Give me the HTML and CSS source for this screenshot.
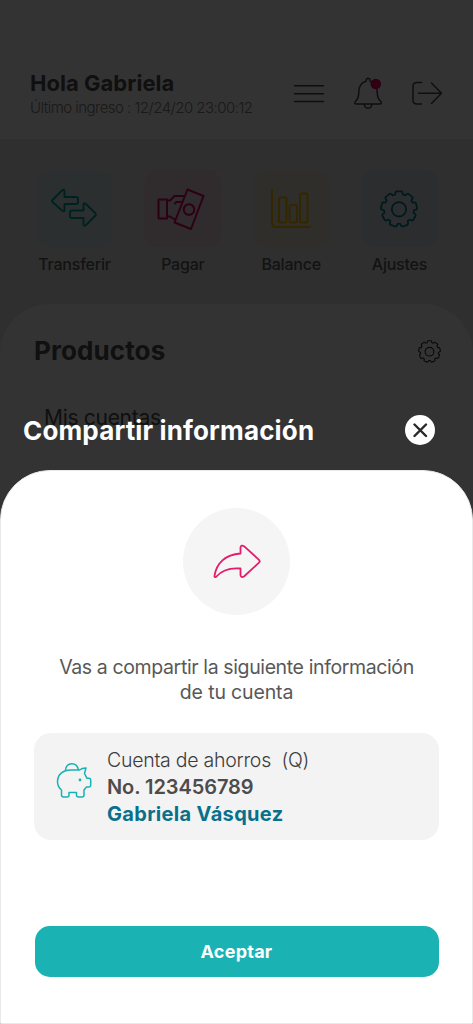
FILE: index.html
```html
<!DOCTYPE html>
<html lang="es">
<head>
<meta charset="utf-8">
<title>Compartir información</title>
<link rel="stylesheet" href="styles.css">
</head>
<body>
<svg width="0" height="0" class="defs">
  <symbol id="gear" viewBox="0 0 38 38">
    <path d="M15.570 2.300Q15.600 1.300 16.600 1.300H21.400Q22.400 1.300 22.430 2.300L22.880 4.510 25.340 5.410 27 4Q27.730 3.260 28.500 3.900L32.400 7.100Q33 7.670 32.500 8.400L31.290 10.400 32.590 12.660 34.900 12.500Q35.800 12.550 36 13.400L37 18.300Q37 19.310 36.200 19.500L33.940 20.310 33.490 22.880 35.400 24.300Q36.020 24.860 35.600 25.700L33.200 30Q32.580 30.810 31.800 30.500L29.610 29.610 27.600 31.290 28.100 33.500Q28.270 34.430 27.400 34.800L22.800 36.500Q21.820 36.780 21.400 36L20.310 33.940H17.690L16.600 36Q16.180 36.780 15.200 36.500L10.600 34.800Q9.730 34.430 9.900 33.500L10.400 31.290 8.390 29.610 6.200 30.500Q5.420 30.810 4.800 30L2.400 25.700Q1.980 24.860 2.600 24.300L4.510 22.880 4.060 20.310 1.800 19.500Q1 19.310 1 18.300L2 13.400Q2.200 12.550 3.100 12.500L5.410 12.660 6.710 10.400 5.500 8.400Q5 7.670 5.600 7.100L9.500 3.900Q10.270 3.260 11 4L12.660 5.410 15.120 4.510z"/>
    <circle cx="19" cy="19.300" r="7.200"/>
  </symbol>
</svg>
<div class="screen">
  <main class="home">
    <header class="top">
      <div class="hello">
        <h1>Hola Gabriela</h1>
        <p>Último ingreso : 12/24/20 23:00:12</p>
      </div>
      <nav class="tools">
        <svg class="icon" width="32" height="32" viewBox="0 0 32 32"><path d="M1.500 8.800h29M1.500 16.800h29M1.500 24.500h29"/></svg>
        <svg class="icon" width="30" height="32" viewBox="0 0 30 32"><path d="M13 4.200c-.2-4 4.400-4 4.100 0 4.600 1.400 6.900 4.900 7 9.800.1 5.500.7 8 3.500 10.300 1.400 1.400.8 2.700-1 2.700H3.700c-2 0-2.600-1.300-1.100-2.700C5.500 21.800 5.800 19 5.900 14c.1-5.200 2.700-8.400 7.100-9.800zM11.300 27.300c.3 5.200 7.200 5.200 7.500 0"/><circle class="dot" cx="22.800" cy="7" r="5.300"/></svg>
        <svg class="icon" width="32" height="32" viewBox="0 0 32 32"><path d="M10.500 5.500H6q-4 0-4 4v13.500q0 4 4 4h4.500M7.500 16.200H30M20.500 6l10 10.200-10 10.300"/></svg>
      </nav>
    </header>
    <section class="quick">
      <div class="action teal"><div class="tile"><svg width="48" height="42" viewBox="0 0 48 42"><path d="M2.500 12 12 2.500q2.500-2 2.500 1V9H26q2 0 2 2v3q0 2-2 2H14.500v5.500q0 3-2.500 1L2.500 14q-1-1 0-2zM45.500 25.500 36 16q-2.500-2-2.500 1v5.500H22q-2 0-2 2v3.500q0 2 2 2h11.500v6q0 3 2.500 1l9.500-9.500q1-1 0-2z"/></svg></div><span class="t1">Transferir</span></div>
      <div class="action pink"><div class="tile"><svg width="48" height="42" viewBox="0 0 48 42"><path d="M1.500 11.500h8.500v19H1.500zM10 12.500h3l4.500-4.500h10.500M10 28.500h3l5.500 3.500M18 15.500l1.500-1.500h5.500M30.500 1.500 46.500 8 34 41 17.500 34.500z"/><circle cx="32" cy="21.500" r="5.300"/></svg></div><span class="t2">Pagar</span></div>
      <div class="action yellow"><div class="tile"><svg width="42" height="42" viewBox="0 0 42 42"><path d="M2 2v33q0 4 4 4h34"/><rect x="9" y="9.500" width="7.500" height="25" rx="1.500"/><rect x="19.500" y="17" width="7.500" height="17.500" rx="1.500"/><rect x="30" y="5.500" width="7.500" height="29" rx="1.500"/></svg></div><span class="t3">Balance</span></div>
      <div class="action blue"><div class="tile"><svg width="38" height="38"><use href="#gear"/></svg></div><span class="t4">Ajustes</span></div>
    </section>
    <section class="products">
      <div class="products-head"><h2>Productos</h2><svg class="icon" width="23" height="23"><use href="#gear"/></svg></div>
      <p>Mis cuentas</p>
    </section>
  </main>
  <div class="overlay">
    <div class="modal-head">
      <h2>Compartir información</h2>
      <button class="close" aria-label="Cerrar"><svg width="15" height="15" viewBox="0 0 15 15"><path d="M1.500 1.500l11.500 11.500M13 1.500l-11.500 11.500"/></svg></button>
    </div>
    <section class="sheet">
      <div class="badge"><svg width="48" height="36" viewBox="0 0 48 36"><path d="M27.500 9.500V3.500q.5-3 3.500-1.300L46 15.800q1.300 1.400 0 2.800L31 32.500q-3 1.500-3.500-1.300V24.500C17 23.500 9 26 3.500 32.500c-1 1.200-2.300.7-2-.8C3.500 19.500 12 10.500 27.500 9.500z"/></svg></div>
      <p class="lead"><span class="l1">Vas a compartir la siguiente información</span><br><span class="l2">de tu cuenta</span></p>
      <div class="card">
        <svg width="36" height="38" viewBox="0 0 36 38"><path d="M15 9C7 9 1.500 13.500 1.500 20.500c0 4 1.500 6.500 4 8.500v5q0 2 2 2h3.500q2 0 2-2v-2.500h7.500V34q0 2 2 2H26q2 0 2-2v-5l2.500-3H33q1.700 0 1.700-1.700V19q0-1.700-1.700-1.700h-2l-2.500-4.800 1.500-5.500q-4 0-6.500 2zM9.300 9.500c1-9 11.700-9 13.200-.5"/><circle cx="24" cy="19" r="1.400" class="eye"/></svg>
        <div class="info">
          <span class="kind">Cuenta de ahorros&nbsp; (Q)</span>
          <span class="number">No. 123456789</span>
          <span class="owner">Gabriela Vásquez</span>
        </div>
      </div>
      <button class="accept">Aceptar</button>
    </section>
  </div>
</div>
</body>
</html>
```
FILE: styles.css
```css
* { box-sizing: border-box; }
body { margin: 0; font-family: Inter, "Open Sans", sans-serif; }
h1, h2, p { margin: 0; }
button { border: 0; padding: 0; font: inherit; }
svg { display: block; flex: none; fill: none; stroke: currentColor; stroke-width: 1.5; stroke-linejoin: round; stroke-linecap: round; }
.defs { position: absolute; }
.screen { position: relative; width: 473px; height: 1024px; overflow: hidden; background: #fff; }
.home { height: 100%; display: flex; flex-direction: column; background: #eaeaea; color: #505050; white-space: nowrap; }
.top { height: 139px; padding: 69px 30px 0; background: #fff; display: flex; justify-content: space-between; }
.hello { width: 230px; }
.hello h1 { font-size: 22px; line-height: 28px; letter-spacing: .03px; }
.hello p { font-size: 15px; line-height: 22px; font-weight: 300; letter-spacing: -.53px; color: #808080; }
.tools { display: flex; gap: 28px; padding-top: 8px; color: #484848; }
.dot { fill: #e5005b; stroke: none; }
.quick { height: 165px; padding: 31px 35px 0 36px; display: flex; justify-content: space-between; }
.action { width: 77px; display: flex; flex-direction: column; align-items: center; gap: 7px; }
.tile { width: 77px; height: 77px; border-radius: 13px; display: flex; align-items: center; justify-content: center; }
.tile svg { stroke-width: 2; }
.action span { font-size: 16px; line-height: 21px; font-weight: 500; letter-spacing: -.22px; color: #606060; }
.teal .tile { background: #dcebee; color: #00a6a4; padding-right: 2px; }
.pink .tile { background: #eedde2; color: #e0005e; padding-right: 3px; }
.yellow .tile { background: #ece6d4; color: #ffc000; }
.blue .tile { background: #dce2e8; color: #007c97; }
.tile use { stroke-width: 1.8; }
.products { flex: 1; background: #fff; border-radius: 50px 50px 0 0; padding: 30px 32px 0 34px; }
.products-head { display: flex; align-items: center; justify-content: space-between; }
.products-head svg { stroke-width: 1.9; color: #303030; }
.products h2 { font-size: 26px; line-height: 34px; letter-spacing: .1px; }
.products p { font-size: 21px; line-height: 28px; letter-spacing: -.3px; padding: 36px 0 0 10px; }
.overlay { position: absolute; inset: 0; padding-top: 410px; background: rgba(0, 0, 0, .8); display: flex; flex-direction: column; white-space: nowrap; }
.modal-head { height: 60px; flex: none; padding: 5px 38px 0 23px; display: flex; justify-content: space-between; align-items: flex-start; }
.modal-head h2 { color: #fff; font-size: 26px; line-height: 32px; letter-spacing: .15px; }
.close { width: 30px; height: 30px; border-radius: 50%; background: #fff; color: #282828; display: flex; align-items: center; justify-content: center; }
.close svg { stroke-width: 2.400; }
.sheet { flex: 1; background: #fff; border: 1px solid #e9e9e9; border-radius: 50px 50px 0 0; padding: 37px 33px 0; display: flex; flex-direction: column; align-items: center; }
.badge { flex: none; width: 107px; height: 107px; border-radius: 50%; background: #f5f5f5; color: #e51b6b; display: flex; align-items: center; justify-content: center; }
.badge svg { stroke-width: 1.8; }
.lead { margin-top: 40px; text-align: center; color: #585858; font-size: 19.5px; line-height: 25px; }
.l1 { letter-spacing: -.38px; }
.l2 { letter-spacing: -.15px; }
.card { width: 405px; height: 107px; flex: none; margin-top: 28px; padding: 2px 22px 0; border-radius: 17px; background: #f3f3f3; display: flex; align-items: center; gap: 15px; color: #18b2b3; }
.card svg { margin-bottom: 15px; }
.eye { fill: currentColor; stroke: none; }
.info { display: flex; flex-direction: column; align-items: flex-start; font-size: 20px; line-height: 27px; }
.kind { color: #3c3c3c; font-size: 19.5px; font-weight: 300; letter-spacing: -.26px; }
.number { color: #4c4c4c; font-weight: 600; letter-spacing: -.08px; }
.owner { color: #08708b; font-weight: 700; letter-spacing: .33px; }
.accept { width: 404px; height: 51px; flex: none; margin-top: 86px; border-radius: 15px; background: #1ab2b3; color: #fff; font-size: 18px; font-weight: 700; letter-spacing: .25px; }
```
